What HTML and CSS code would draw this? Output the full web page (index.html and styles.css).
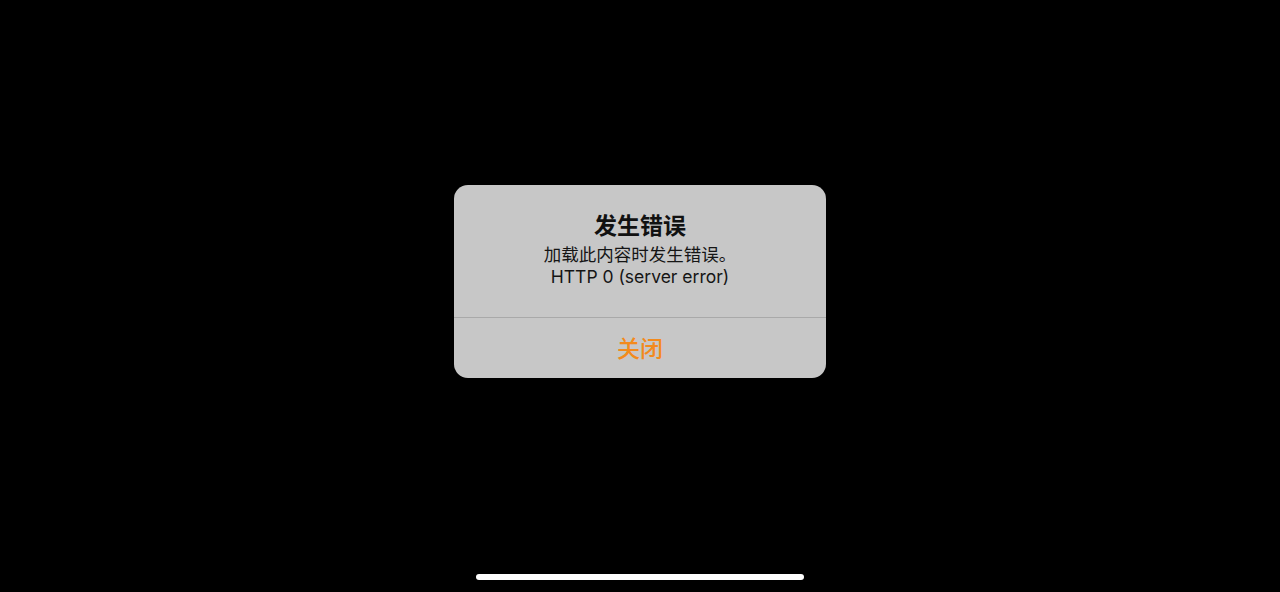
FILE: index.html
```html
<!DOCTYPE html>
<html lang="zh-CN">
<head>
    <meta charset="UTF-8">
    <meta name="viewport" content="width=device-width, initial-scale=1.0">
    <title>发生错误</title>
    <link rel="stylesheet" href="styles.css">
</head>
<body>
    <div class="screen">
        <div class="alert">
            <div class="alert-body">
                <h1 class="alert-title">发生错误</h1>
                <p class="alert-message">加载此内容时发生错误。<br>HTTP 0 (server error)</p>
            </div>
            <button class="alert-button" type="button">关闭</button>
        </div>
        <div class="home-bar"></div>
    </div>
</body>
</html>
```

FILE: styles.css
```css
body {
    margin: 0;
    padding: 0;
    background-color: #000;
    font-family: Inter, "Noto Sans CJK SC", sans-serif;
}
.screen {
    height: 592px;
    display: flex;
    flex-direction: column;
    align-items: center;
}
.alert {
    margin-top: 185px;
    width: 372px;
    background-color: #c7c7c7;
    border-radius: 14px;
    overflow: hidden;
}
.alert-body {
    padding: 27px 16px 29px;
    text-align: center;
    border-bottom: 1px solid #a9a9a9;
}
.alert-title {
    margin: 0 0 4px;
    font-size: 23px;
    line-height: 28px;
    font-weight: 700;
    color: #111;
}
.alert-message {
    margin: 0;
    font-size: 17.5px;
    line-height: 22px;
    color: #151515;
}
.alert-button {
    display: block;
    width: 100%;
    height: 60px;
    padding: 0 0 2px;
    border: none;
    background: transparent;
    font-family: inherit;
    font-size: 23px;
    font-weight: 500;
    color: #f38a1c;
    cursor: pointer;
}
.home-bar {
    margin-top: auto;
    margin-bottom: 12px;
    width: 328px;
    height: 6px;
    border-radius: 3px;
    background-color: #fff;
}
```
